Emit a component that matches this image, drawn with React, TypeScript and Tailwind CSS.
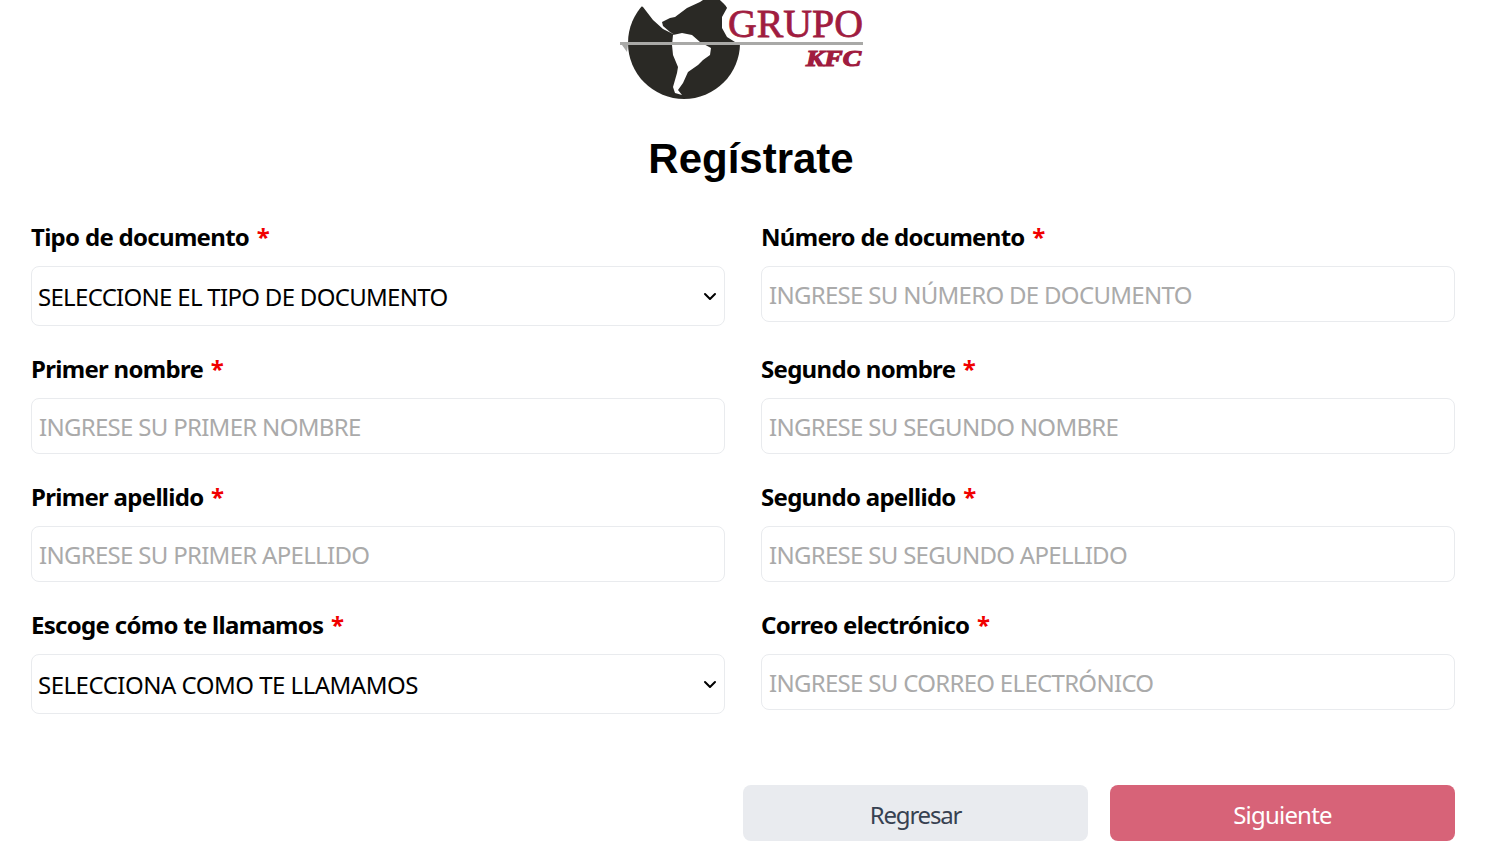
const font = "font-['Noto_Sans','Open_Sans',sans-serif]";

function Logo() {
  return (
    <svg width="260" height="100" viewBox="616 0 260 100" className="block">
      <circle cx="684" cy="43" r="56" fill="#2a2925" />
      <path d="M643 7 L628 -2 L706 -2 L700 2 L687 8 L675 17 L670 18 L662 22 L663 26 L670 32 L675 35 L663 29 L653 20 Z" fill="#fff" />
      <path d="M723 -2 L727 8 L722 17 L722 28 L727 37 L735 42 L750 42 L750 -2 Z" fill="#fff" />
      <path d="M673 35 L682 33 L692 35 L700 42 L711 48 L710 55 L703 60 L698 65 L688 72 L683 83 L678 90 L682 95 L675 93 L673 87 L677 73 L678 67 L673 55 L672 45 Z" fill="#fff" />
      <path d="M620 42 L863 42 L863 45 L628 45 L627 52 L622 45 L620 45 Z" fill="#a9a9a7" />
      <text x="728" y="37" fill="#a01c3f" stroke="#a01c3f" strokeWidth="0.8" className="font-['Liberation_Serif',serif]" fontSize="41" textLength="135" lengthAdjust="spacingAndGlyphs">GRUPO</text>
      <text x="806" y="66" fill="#a01c3f" stroke="#a01c3f" strokeWidth="1.2" className="font-['Liberation_Serif',serif]" fontSize="23" fontWeight="700" fontStyle="italic" textLength="55" lengthAdjust="spacingAndGlyphs">KFC</text>
    </svg>
  );
}

function Label({ text }: { text: string }) {
  return (
    <label className={`block h-7 mb-[15px] text-[24px] leading-7 font-bold tracking-[-0.7px] text-black ${font}`}>
      {text} <span className="ml-0.5 text-[#f00000]">*</span>
    </label>
  );
}

function SelectField({ label, value, tracking }: { label: string; value: string; tracking: string }) {
  return (
    <div>
      <Label text={label} />
      <div className="flex h-[60px] items-center justify-between rounded-lg border border-[#e9ebee] bg-white pl-1.5 pr-1.5">
        <span className={`pt-0.5 text-[24px] text-black ${tracking} ${font}`}>{value}</span>
        <svg width="16" height="16" viewBox="0 0 16 16" fill="none" stroke="#000" strokeWidth="2" strokeLinecap="round" strokeLinejoin="round">
          <path d="M3 6 L8 11 L13 6" />
        </svg>
      </div>
    </div>
  );
}

function InputField({ label, placeholder }: { label: string; placeholder: string }) {
  return (
    <div>
      <Label text={label} />
      <input
        readOnly
        placeholder={placeholder}
        className={`block h-14 w-full rounded-lg border border-[#e9ebee] bg-white px-[7px] text-[24px] tracking-[-0.7px] outline-none placeholder:text-[#aaaaaa] ${font}`}
      />
    </div>
  );
}

export default function App() {
  return (
    <div className="h-[852px] overflow-hidden bg-white pl-[31px] pr-[37px]">
      <div className="flex h-[100px] justify-center pl-[6px]">
        <Logo />
      </div>
      <h1 className="mt-[30px] mb-[35px] h-[58px] pl-[16px] text-center font-['Liberation_Sans',sans-serif] text-[42px] font-bold leading-[58px] text-black">
        Regístrate
      </h1>
      <div className="grid grid-cols-2 gap-x-9 gap-y-[29px] items-start">
        <SelectField label="Tipo de documento" value="SELECCIONE EL TIPO DE DOCUMENTO" tracking="tracking-[-0.7px]" />
        <InputField label="Número de documento" placeholder="INGRESE SU NÚMERO DE DOCUMENTO" />
        <InputField label="Primer nombre" placeholder="INGRESE SU PRIMER NOMBRE" />
        <InputField label="Segundo nombre" placeholder="INGRESE SU SEGUNDO NOMBRE" />
        <InputField label="Primer apellido" placeholder="INGRESE SU PRIMER APELLIDO" />
        <InputField label="Segundo apellido" placeholder="INGRESE SU SEGUNDO APELLIDO" />
        <SelectField label="Escoge cómo te llamamos" value="SELECCIONA COMO TE LLAMAMOS" tracking="tracking-[-0.5px]" />
        <InputField label="Correo electrónico" placeholder="INGRESE SU CORREO ELECTRÓNICO" />
      </div>
      <div className={`mt-[71px] flex justify-end gap-[22px] text-[24px] ${font}`}>
        <button className="h-14 w-[345px] rounded-lg bg-[#e9ebef] pt-[3px] tracking-[-1.2px] text-[#374151]">Regresar</button>
        <button className="h-14 w-[345px] rounded-lg bg-[#d76378] pt-[3px] tracking-[-0.8px] text-white">Siguiente</button>
      </div>
    </div>
  );
}
